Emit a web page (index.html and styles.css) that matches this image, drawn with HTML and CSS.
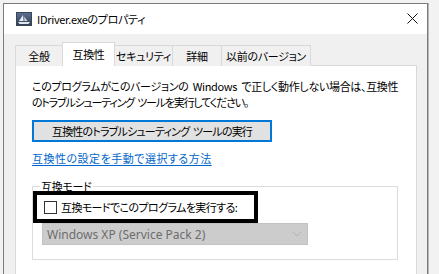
FILE: index.html
```html
<!DOCTYPE html>
<html lang="ja">
<head>
<meta charset="utf-8">
<title>IDriver.exeのプロパティ</title>
<link rel="stylesheet" href="styles.css">
</head>
<body>
<div class="window">
  <div class="titlebar">
    <svg class="app-icon" width="16" height="16" viewBox="0 0 16 16">
      <defs>
        <linearGradient id="ig" x1="0" y1="0" x2="0" y2="1">
          <stop offset="0" stop-color="#5d7290"/>
          <stop offset="1" stop-color="#2f3d52"/>
        </linearGradient>
      </defs>
      <rect x="0.5" y="1.5" width="15" height="13" fill="url(#ig)" stroke="#3a4658"/>
      <path d="M3 10 L7 4 L7.6 10 Z" fill="#e8eef6"/>
      <path d="M8.3 10 L8.3 5.5 L11.5 10 Z" fill="#c9d4e3"/>
      <path d="M2 11 L14 11 L12.5 13 L3.5 13 Z" fill="#dfe6ef"/>
    </svg>
    <span class="title">IDriver.exeのプロパティ</span>
    <svg class="close" width="11" height="11" viewBox="0 0 11 11">
      <path d="M0.5 0.5 L10.5 10.5 M10.5 0.5 L0.5 10.5" stroke="#111" stroke-width="1"/>
    </svg>
  </div>
  <div class="body">
    <div class="tabs">
      <div class="tab t1">全般</div>
      <div class="tab t2 active">互換性</div>
      <div class="tab t3">セキュリティ</div>
      <div class="tab t4">詳細</div>
      <div class="tab t5">以前のバージョン</div>
    </div>
    <div class="panel">
      <p class="intro"><span class="l1">このプログラムがこのバージョンの Windows で正しく動作しない場合は、互換性</span><br><span class="l2">のトラブルシューティング ツールを実行してください。</span></p>
      <button class="btn">互換性のトラブルシューティング ツールの実行</button>
      <a class="link" href="#">互換性の設定を手動で選択する方法</a>
      <fieldset class="group">
        <legend class="legend">互換モード</legend>
        <div class="highlight">
          <span class="checkbox"></span>
          <span class="check-label">互換モードでこのプログラムを実行する:</span>
        </div>
        <div class="select">
          <span class="select-text">Windows XP (Service Pack 2)</span>
          <svg class="chev" width="10" height="6" viewBox="0 0 10 6">
            <path d="M0.5 0.5 L5 5 L9.5 0.5" fill="none" stroke="#b4b4b4" stroke-width="1"/>
          </svg>
        </div>
      </fieldset>
    </div>
  </div>
</div>
</body>
</html>
```
FILE: styles.css
```css
* { box-sizing: border-box; }
html, body {
  margin: 0;
  padding: 0;
  width: 439px;
  height: 274px;
  overflow: hidden;
  background: #f2f2f2;
  font-family: "Noto Sans CJK JP", "Noto Sans", sans-serif;
  font-size: 11px;
  color: #000;
  font-feature-settings: "palt" 1;
}
.window {
  margin: 3px 0 0 3px;
  width: 425px;
  height: 300px;
  border: 1px solid #7a7a7a;
  border-bottom: none;
  box-shadow: 1px 0 0 #b8b8b8;
  background: #f0f0f0;
}
.titlebar {
  height: 30px;
  background: #fff;
  display: flex;
  align-items: center;
  padding-left: 12px;
  padding-right: 9px;
}
.app-icon { flex: none; }
.title {
  margin-left: 5px;
  line-height: 16px;
  flex: 1;
  letter-spacing: -0.3px;
}
.close { flex: none; margin-top: -1px; }
.body {
  padding: 8px 0 0 11px;
}
.tabs {
  display: flex;
  align-items: flex-end;
  height: 24px;
  position: relative;
  z-index: 1;
  margin-bottom: -1px;
}
.tab {
  height: 21px;
  border: 1px solid #d9d9d9;
  border-bottom: none;
  background: #f0f0f0;
  text-align: center;
  line-height: 20px;
  margin-left: -1px;
  white-space: nowrap;
  letter-spacing: -0.3px;
}
.tab:first-child { margin-left: 0; }
.t1 { width: 48px; }
.t2 { width: 53px; }
.t3 { width: 59px; }
.t4 { width: 50px; }
.t5 { width: 90px; }
.tab.active {
  height: 24px;
  background: #fff;
  line-height: 22px;
  padding-bottom: 2px;
}
.panel {
  width: 402px;
  height: 220px;
  background: #fff;
  border: 1px solid #d9d9d9;
  padding: 12px 0 0 16px;
  display: flex;
  flex-direction: column;
  align-items: flex-start;
}
.intro {
  margin: 0;
  line-height: 16px;
  white-space: nowrap;
  word-spacing: 2px;
}
.l1 { letter-spacing: -0.32px; }
.l2 { letter-spacing: -1.2px; }
.btn {
  margin-top: 10px;
  width: 240px;
  height: 22px;
  border: 2px solid #0078d7;
  background: #e1e1e1;
  font: inherit;
  color: #000;
  padding: 0;
  line-height: 16px;
  letter-spacing: -0.8px;
  word-spacing: 2px;
}
.link {
  margin-top: 8px;
  color: #0066cc;
  line-height: 16px;
  text-decoration: underline;
  text-underline-offset: 2px;
  letter-spacing: 0.5px;
}
.group {
  margin: 13px 0 0 0;
  width: 366px;
  border: 1px solid #dcdcdc;
  padding: 0 0 14px 9px;
  min-width: 0;
}
.legend {
  padding: 0 1px;
  margin-left: -2px;
  line-height: 14px;
  letter-spacing: -0.3px;
}
.highlight {
  margin: -2px 0 0 -9px;
  width: 225px;
  height: 32px;
  border: 4px solid #000;
  background: #fff;
  display: flex;
  align-items: center;
  padding-left: 7px;
  position: relative;
}
.checkbox {
  width: 13px;
  height: 13px;
  border: 1px solid #333;
  background: #fff;
  flex: none;
}
.check-label {
  margin-left: 4px;
  line-height: 16px;
  white-space: nowrap;
  letter-spacing: -0.6px;
}
.select {
  width: 266px;
  height: 22px;
  background: #cccccc;
  border: 1px solid #c2c2c2;
  display: flex;
  align-items: center;
  padding: 0 5px 0 4px;
}
.select-text {
  flex: 1;
  color: #6d6d6d;
  font-family: "Noto Sans", sans-serif;
  font-size: 12px;
}
.chev { flex: none; }
```
